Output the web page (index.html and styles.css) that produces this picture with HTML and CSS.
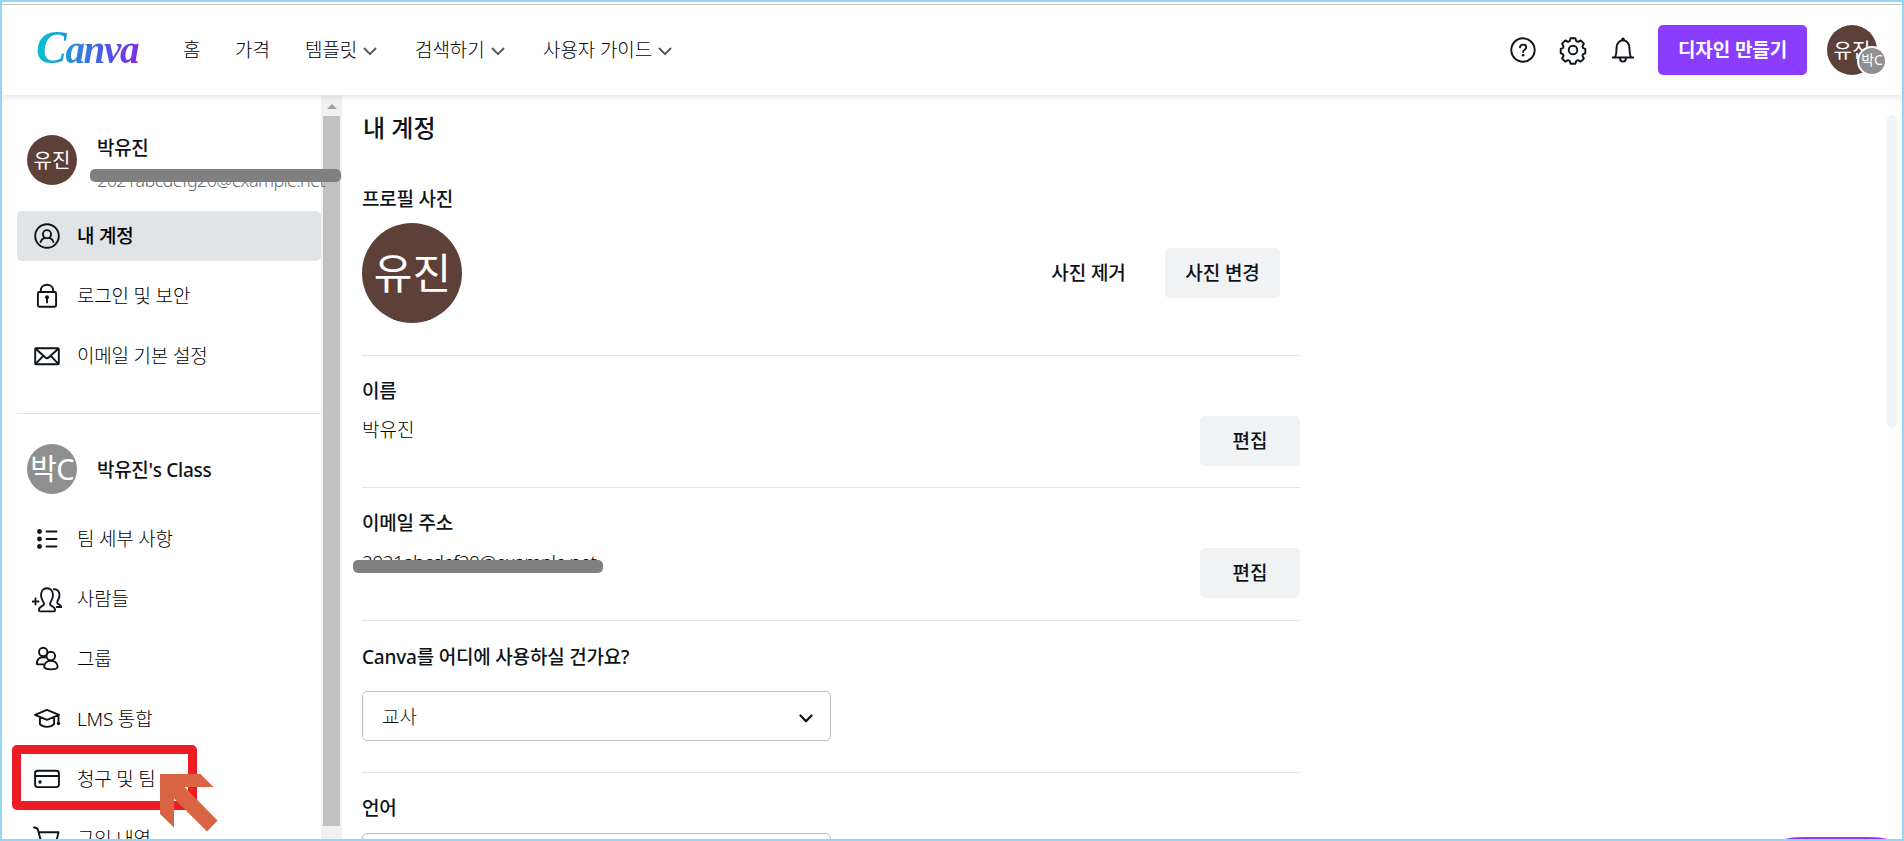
FILE: index.html
```html
<!DOCTYPE html>
<html lang="ko">
<head>
    <meta charset="UTF-8" />
    <meta name="viewport" content="width=device-width, initial-scale=1.0" />
    <title>내 계정 - Canva</title>
    <link rel="stylesheet" href="styles.css">
</head>
<body>
    <header class="topbar">
        <a class="logo"><span class="logo-cap">C</span>anva</a>
        <nav class="nav">
            <a class="nav-home">홈</a>
            <a class="nav-price">가격</a>
            <a class="nav-tpl">템플릿 <svg class="chev" viewBox="0 0 14 9"><path d="M1.500 1.500 7 7.200l5.500-5.700"/></svg></a>
            <a class="nav-find">검색하기 <svg class="chev" viewBox="0 0 14 9"><path d="M1.500 1.500 7 7.200l5.500-5.700"/></svg></a>
            <a class="nav-guide">사용자 가이드 <svg class="chev" viewBox="0 0 14 9"><path d="M1.500 1.500 7 7.200l5.500-5.700"/></svg></a>
        </nav>
        <div class="actions">
            <svg class="icon" viewBox="0 0 30 30"><circle cx="15" cy="15" r="11.700"/><path d="M12 12.300c.2-1.700 1.400-2.700 3.100-2.700 1.800 0 3.100 1.100 3.100 2.700 0 2.500-3.100 2.300-3.100 4.700"/><circle class="fill" cx="15.100" cy="20.200" r="1.300"/></svg>
            <svg class="icon" viewBox="0 0 30 30"><circle cx="15" cy="15" r="4.300"/><path d="M12.600 3.200h4.800l.8 2.900 1.800.8 2.700-1.500 3.200 3.300-1.500 2.700.7 1.700 2.200.7v4.500l-2.200.8-.7 1.700 1.500 2.700-3.200 3.200-2.700-1.500-1.800.8-.8 2.700h-4.800l-.8-2.700-1.800-.8-2.700 1.500-3.200-3.200 1.500-2.700-.7-1.700-2.200-.8v-4.500l2.200-.7.700-1.700-1.500-2.700 3.200-3.300 2.700 1.500 1.800-.8z"/></svg>
            <svg class="icon" viewBox="0 0 30 30"><path d="M4.800 22.500h20.400M6.800 22.300c1.500-2 1.700-3.800 1.700-9 0-4.500 2.600-8 6.500-8s6.500 3.500 6.500 8c0 5.200.2 7 1.700 9M12 23c0 4.800 6 4.800 6 0"/><circle class="fill" cx="15" cy="4.400" r="1.800"/></svg>
            <button class="create">디자인 만들기</button>
            <div class="avatar me">유진<span class="badge">박C</span></div>
        </div>
    </header>

    <div class="layout">
        <aside class="sidebar">
            <div class="side-content">
                <div class="profile">
                    <div class="avatar">유진</div>
                    <div class="who">
                        <strong>박유진</strong>
                        <span class="mail">2021abcdefg20@example.net</span>
                        <span class="redact side-redact"></span>
                    </div>
                </div>
                <ul class="menu">
                    <li class="active"><svg class="icon" viewBox="0 0 30 30"><circle cx="15" cy="15" r="11.800"/><circle cx="15" cy="13.200" r="4.100"/><path d="M8.600 21c.6-2.300 2.100-3.500 4.200-4.200M21.400 21c-.6-2.300-2.100-3.500-4.200-4.200"/></svg>내 계정</li>
                    <li><svg class="icon" viewBox="0 0 30 30"><rect x="5.900" y="11" width="18.200" height="14.800" rx="1.500"/><path d="M8.800 11V9.500C8.800 1.800 21.200 1.800 21.200 9.500V11M15 17v4.500"/><circle class="fill" cx="15" cy="16.300" r="2"/></svg>로그인 및 보안</li>
                    <li><svg class="icon" viewBox="0 0 30 30"><rect x="3.200" y="7.200" width="23.600" height="16" rx="1"/><path d="m3.700 7.700 9.700 8.800c1 .9 2.200.9 3.200 0l9.700-8.800M3.700 22.800l7.500-8M26.300 22.800l-7.500-8"/></svg>이메일 기본 설정</li>
                </ul>
                <hr>
                <div class="profile team">
                    <div class="avatar gray">박C</div>
                    <strong>박유진's Class</strong>
                </div>
                <ul class="menu">
                    <li><svg class="icon" viewBox="0 0 30 30"><g class="fill"><circle cx="7.500" cy="7.500" r="2.400"/><circle cx="7.500" cy="15" r="2.400"/><circle cx="7.500" cy="22.500" r="2.400"/></g><path d="M14.500 7.500h10M14.500 15h10M14.500 22.500h10"/></svg>팀 세부 사항</li>
                    <li><svg class="icon" viewBox="0 0 30 30"><path d="M.5 17.500h6M3.500 14.500v6M7 26c0-4.500 5.700-3.200 5-6.500-.3-1.500-3-4.200-3-8.200 0-4 2.200-7 6-7s6 3 6 7c0 4-2.700 6.700-3 8.200-.7 3.300 5 2 5 6.500 0 1-.3 1.400-1 1.400H8c-.7 0-1-.4-1-1.400zM22 5.300c3.200-.4 5.500 2 5.500 6 0 3.600-2.800 5.500-2.200 7.700.4 1.500 3.700 1.300 4 4h-4.500"/></svg>사람들</li>
                    <li><svg class="icon" viewBox="0 0 30 30"><circle cx="11.200" cy="8" r="4.200"/><circle cx="18.800" cy="12" r="4.300"/><path d="M11.500 20.400 5 20.200c-.6-5.200 3.200-7.600 8-6.600M12.200 22.500c.5-7.500 12.500-8 13.500 0 0 3.800-13.500 3.800-13.500 0z"/></svg>그룹</li>
                    <li><svg class="icon" viewBox="0 0 30 30"><path d="m3 10.800 12-5 12 5-12 5zM7.900 13v7.200c3 3.500 11.200 3.500 14.200 0V13M26.500 11v7"/><circle class="fill" cx="26.500" cy="19.500" r="1.700"/></svg>LMS 통합</li>
                    <li><svg class="icon" viewBox="0 0 30 30"><rect x="3.100" y="6.700" width="23.800" height="16.400" rx="2.500"/><path d="M3.100 12h23.800"/><circle class="fill" cx="8" cy="18" r="1.700"/></svg>청구 및 팀</li>
                    <li><svg class="icon" viewBox="0 0 30 30"><path d="M2 3.500c3 0 3.500.8 4 2.500L10 21h15M6.800 8.300h19.700L24.500 17 9 18.500"/></svg>구입 내역</li>
                </ul>
            </div>
            <div class="scrollbar"><i class="up"></i><i class="thumb"></i></div>
        </aside>

        <main class="main">
            <h1>내 계정</h1>
            <section class="photo">
                <h2>프로필 사진</h2>
                <div class="row">
                    <div class="avatar big">유진</div>
                    <div class="photo-actions">
                        <button class="btn plain">사진 제거</button>
                        <button class="btn change">사진 변경</button>
                    </div>
                </div>
            </section>
            <section class="field">
                <div>
                    <h2>이름</h2>
                    <p>박유진</p>
                </div>
                <button class="btn edit">편집</button>
            </section>
            <section class="field mail-field">
                <div class="mail-value">
                    <h2>이메일 주소</h2>
                    <p class="mail">2021abcdef20@example.net</p>
                    <span class="redact main-redact"></span>
                </div>
                <button class="btn edit">편집</button>
            </section>
            <section class="usage">
                <h2>Canva를 어디에 사용하실 건가요?</h2>
                <div class="select">교사<svg class="chev dark" viewBox="0 0 14 9"><path d="M1.500 1.500 7 7.200l5.500-5.700"/></svg></div>
            </section>
            <section class="language">
                <h2>언어</h2>
                <div class="select"></div>
            </section>
        </main>
    </div>

    <div class="page-scroll"></div>
    <div class="help-pill"></div>
    <div class="mark"></div>
    <svg class="pointer" viewBox="0 0 60 60"><path d="M1 1h40.500l13 13H25.500L58.500 47.500 48 58.500 15 25.500v29L1 41z"/></svg>
    <div class="frame"></div>
</body>
</html>
```
FILE: styles.css
```css
* { margin: 0; padding: 0; box-sizing: border-box; }
html { overflow: hidden; }
body {
    position: relative;
    width: 1904px;
    height: 841px;
    overflow: hidden;
    background: #fff;
    color: #0e1318;
    font-family: 'Noto Sans', 'Noto Sans CJK KR', sans-serif;
    font-size: 19px;
    font-weight: 300;
}
.frame {
    position: absolute;
    inset: 0;
    border: 2px solid #93d7f5;
    z-index: 9;
}
.topbar {
    position: relative;
    z-index: 2;
    display: flex;
    align-items: center;
    height: 95px;
    padding: 5px 27px 0 36px;
    background: linear-gradient(#fff 4px, #c8c8c8 4px, #c8c8c8 5px, #fff 5px);
    box-shadow: 0 1px 8px rgba(14, 19, 24, 0.15);
}
.logo {
    width: 104px;
    margin: -2px 0 0;
    font-family: 'Liberation Serif', serif;
    font-size: 39px;
    line-height: 44px;
    font-style: italic;
    font-weight: 700;
    letter-spacing: -1.3px;
    white-space: nowrap;
    background: linear-gradient(90deg, #00c4cc, #3a72e4 50%, #7d2ae8);
    -webkit-background-clip: text;
    background-clip: text;
    color: transparent;
}
.logo-cap { font-size: 46px; }
.nav { display: flex; padding-bottom: 2px; color: #000; }
.nav a {
    display: flex;
    align-items: center;
    letter-spacing: -0.1px;
    white-space: nowrap;
}
.nav-home { margin-left: 43px; width: 52px; }
.nav-price { width: 70px; }
.nav-tpl { width: 110px; }
.nav-find { width: 128px; }
.chev {
    width: 14px;
    height: 9px;
    margin: 5px 0 0 6px;
    fill: none;
    stroke: #54585c;
    stroke-width: 1.9;
    stroke-linecap: round;
    stroke-linejoin: round;
}
.icon {
    flex: none;
    width: 30px;
    height: 30px;
    fill: none;
    stroke: #0e1318;
    stroke-width: 1.9;
    stroke-linecap: round;
    stroke-linejoin: round;
}
.icon .fill { fill: #0e1318; stroke: none; }
.actions {
    display: flex;
    align-items: center;
    gap: 20px;
    margin-left: auto;
}
button {
    height: 50px;
    padding-bottom: 2px;
    border: none;
    border-radius: 5px;
    font-family: inherit;
    font-size: 19px;
    font-weight: 500;
    letter-spacing: -0.1px;
    color: #0e1318;
    white-space: nowrap;
}
.create {
    width: 149px;
    background: #8b3dff;
    color: #fff;
    font-weight: 700;
}
.avatar {
    position: relative;
    flex: none;
    display: flex;
    align-items: center;
    justify-content: center;
    width: 50px;
    height: 50px;
    padding-bottom: 2px;
    border-radius: 50%;
    background: #5d4037;
    color: #fff;
    font-size: 20px;
    font-weight: 400;
}
.avatar.gray {
    padding-bottom: 4px;
    background: #8f8f8f;
    font-size: 29px;
    letter-spacing: -0.8px;
}
.avatar.big {
    width: 100px;
    height: 100px;
    padding: 0 0 6px 1px;
    font-size: 42px;
}
.badge {
    position: absolute;
    left: 30px;
    top: 21px;
    width: 30px;
    height: 30px;
    border: 2px solid #fff;
    border-radius: 50%;
    background: #8f8f8f;
    font-size: 14px;
    line-height: 24px;
    text-align: center;
}

.layout { display: flex; height: 746px; overflow: hidden; }
.sidebar {
    display: flex;
    flex: none;
    width: 342px;
}
.side-content { width: 321px; padding: 40px 0 0 17px; }
.profile {
    display: flex;
    align-items: center;
    gap: 20px;
    height: 50px;
    padding-left: 10px;
}
.profile strong { font-weight: 500; letter-spacing: -0.3px; }
.who { position: relative; height: 52px; }
.who strong {
    display: block;
    line-height: 28px;
}
.who .mail {
    display: block;
    width: 224px;
    margin-top: 5px;
    font-size: 18px;
    line-height: 26px;
    letter-spacing: -0.65px;
    white-space: nowrap;
    color: #6a6e72;
}
.redact {
    position: absolute;
    border-radius: 5px;
    background: #808080;
}
.side-redact { left: -7px; top: 35px; width: 251px; height: 13px; z-index: 1; }
.main-redact { left: -9px; top: 51px; width: 250px; height: 13px; }
.menu {
    display: flex;
    flex-direction: column;
    gap: 10px;
    padding-top: 26px;
    list-style: none;
}
.menu li {
    display: flex;
    flex: none;
    align-items: center;
    gap: 15px;
    height: 50px;
    padding: 0 0 2px 15px;
    border-radius: 5px;
    letter-spacing: -0.2px;
    color: #000;
}
.menu .icon { margin-top: 2px; }
.menu .active { background: #e0e4e7; font-weight: 500; }
hr {
    height: 1px;
    margin: 32px 0 30px;
    border: none;
    background: #e0e4e7;
}
.team + .menu { padding-top: 20px; }
.scrollbar {
    display: flex;
    flex-direction: column;
    align-items: center;
    width: 21px;
    background: #f1f1f1;
}
.up {
    margin: 9px 0 7px;
    border: 5px solid transparent;
    border-top: none;
    border-bottom-color: #a0a0a0;
}
.thumb { width: 17px; height: 710px; background: #c1c1c1; }

.main { width: 958px; padding: 15px 0 0 20px; }
h1 { padding-left: 1px; font-size: 24px; line-height: 36px; font-weight: 500; }
h2 { font-size: 19px; line-height: 28px; font-weight: 500; letter-spacing: -0.2px; }
section { border-bottom: 1px solid #e0e4e7; }
.photo { height: 210px; padding-top: 39px; }
.row {
    display: flex;
    justify-content: space-between;
    align-items: center;
    margin-top: 10px;
}
.photo-actions { display: flex; padding-right: 20px; }
.btn { background: #f1f2f4; }
.plain { width: 113px; margin-right: 20px; background: none; }
.change { width: 115px; }
.edit { width: 100px; margin-top: 39px; }
.field {
    display: flex;
    justify-content: space-between;
    height: 132px;
    padding-top: 21px;
}
.field p { margin-top: 11px; line-height: 28px; color: #000; }
.field .mail { letter-spacing: -0.5px; }
.mail-field { height: 133px; }
.mail-field .edit { margin-top: 40px; margin-top: 39px; }
.mail-value { position: relative; }
.usage { height: 152px; padding-top: 22px; }
.select {
    display: flex;
    align-items: center;
    justify-content: space-between;
    width: 469px;
    height: 50px;
    margin-top: 20px;
    padding: 0 17px 0 19px;
    border: 1px solid #babec3;
    border-radius: 5px;
}
.chev.dark { stroke: #0e1318; stroke-width: 2.2; margin-top: 4px; }
.language { border: none; padding-top: 21px; }
.language .select { margin-top: 11px; }

.page-scroll {
    position: absolute;
    left: 1887px;
    top: 115px;
    width: 10px;
    height: 313px;
    border-radius: 5px;
    background: #f1f2f4;
}
.help-pill {
    position: absolute;
    left: 1781px;
    top: 837px;
    width: 110px;
    height: 4px;
    border-radius: 25px 25px 0 0 / 4px 4px 0 0;
    background: #8b3dff;
}
.mark {
    position: absolute;
    left: 12px;
    top: 745px;
    width: 185px;
    height: 65px;
    border: 9px solid #ee1c25;
    border-radius: 5px;
}
.pointer {
    position: absolute;
    left: 159px;
    top: 773px;
    width: 60px;
    height: 60px;
    fill: #d96444;
}
```
